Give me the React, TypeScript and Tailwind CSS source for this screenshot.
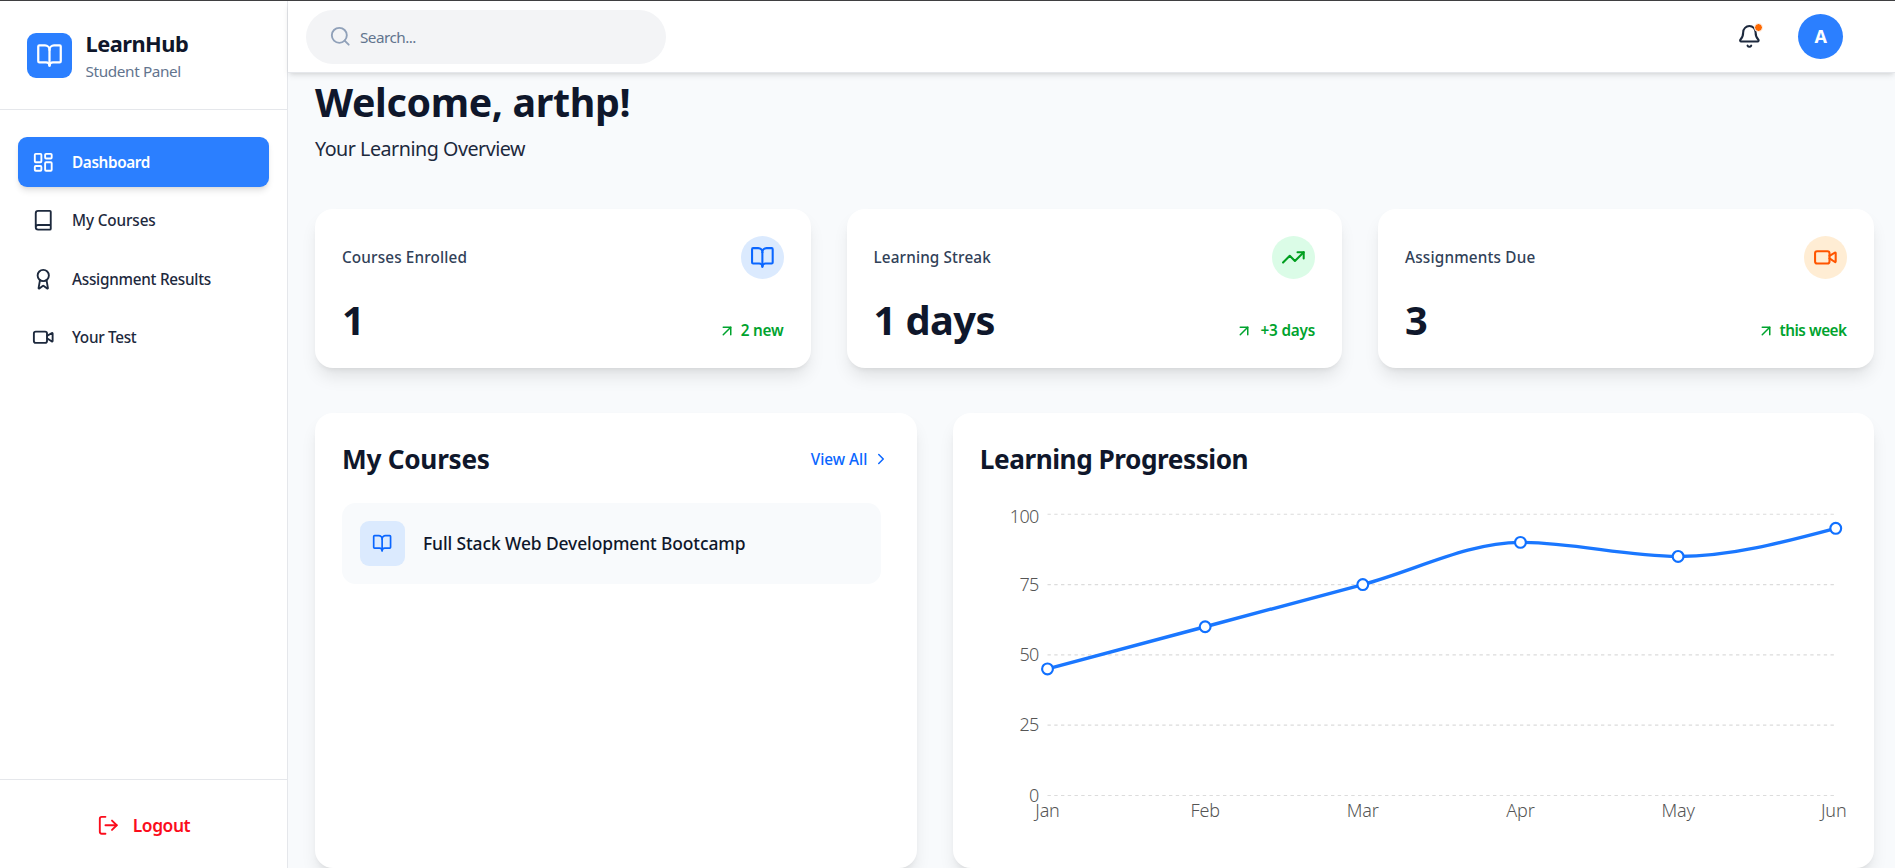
import React from "react";
import {
  ArrowUpRight, Award, Bell, Book, BookOpen, ChevronRight, LayoutDashboard, LogOut, Search, TrendingUp, Video,
} from "lucide-react";

const navItems = [
  { label: "Dashboard", icon: LayoutDashboard, active: true, tracking: "tracking-[-0.024em]" },
  { label: "My Courses", icon: Book, active: false, tracking: "tracking-[-0.008em]" },
  { label: "Assignment Results", icon: Award, active: false, tracking: "tracking-[-0.017em]" },
  { label: "Your Test", icon: Video, active: false, tracking: "tracking-[-0.02em]" },
];

const stats = [
  {
    label: "Courses Enrolled", labelTracking: "tracking-[0.009em]",
    value: "1", trend: "2 new", trendStyle: "tracking-[-0.014em]",
    icon: BookOpen, tone: "bg-blue-100 text-[#0a66ff]",
  },
  {
    label: "Learning Streak", labelTracking: "tracking-[0.008em]",
    value: "1 days", trend: "+3 days", trendStyle: "pl-[2.5px] tracking-[-0.013em]",
    icon: TrendingUp, tone: "bg-green-100 text-[#009f1f]",
  },
  {
    label: "Assignments Due", labelTracking: "tracking-[0.011em]",
    value: "3", trend: "this week", trendStyle: "tracking-[-0.031em]",
    icon: Video, tone: "bg-[#ffedd4] text-[#ff5500]",
  },
];

const progress = [
  { month: "Jan", value: 45 },
  { month: "Feb", value: 60 },
  { month: "Mar", value: 75 },
  { month: "Apr", value: 90 },
  { month: "May", value: 85 },
  { month: "Jun", value: 95 },
];

const plot = { left: 60, right: 760.67, top: 10, bottom: 260 };
const yOf = (v: number) => plot.bottom - (v / 100) * (plot.bottom - plot.top);
const xOf = (i: number) => plot.left + (i * (plot.right - plot.left)) / (progress.length - 1);

/** Monotone cubic path through evenly spaced points. */
function monotonePath(pts: { x: number; y: number }[]) {
  const n = pts.length;
  const h = pts[1].x - pts[0].x;
  const s = pts.slice(1).map((p, i) => (p.y - pts[i].y) / h);
  const t = pts.map((_, i) => {
    if (i === 0 || i === n - 1) return 0;
    const a = s[i - 1];
    const b = s[i];
    return (Math.sign(a) + Math.sign(b)) * Math.min(Math.abs(a), Math.abs(b), Math.abs(a + b) / 4) || 0;
  });
  t[0] = (3 * s[0] - t[1]) / 2;
  t[n - 1] = (3 * s[n - 2] - t[n - 2]) / 2;
  return pts.slice(1).reduce((d, p, i) => {
    const q = pts[i];
    return `${d}C${q.x + h / 3},${q.y + (t[i] * h) / 3},${p.x - h / 3},${p.y - (t[i + 1] * h) / 3},${p.x},${p.y}`;
  }, `M${pts[0].x},${pts[0].y}`);
}

function ProgressChart() {
  const pts = progress.map((p, i) => ({ x: xOf(i), y: yOf(p.value) }));
  return (
    <svg width="770.67" height="300" viewBox="0 0 770.67 300" className="block overflow-visible">
      {[0, 25, 50, 75, 100].map((v) => (
        <g key={v}>
          <line x1={plot.left} x2={plot.right} y1={yOf(v)} y2={yOf(v)} stroke="#dcdcdc" strokeDasharray="3 3" />
          <text x="52" y={yOf(v) + (v === 100 ? 7.5 : 5.5)} textAnchor="end" fill="#555" className="text-base font-light tracking-[-0.04em]">{v}</text>
        </g>
      ))}
      {progress.map((p, i) => (
        <text key={p.month} x={i === 5 ? xOf(i) - 1.8 : xOf(i)} y="278.9" textAnchor="middle" fill="#555" className="text-base font-light tracking-[-0.01em]">{p.month}</text>
      ))}
      <path d={monotonePath(pts)} fill="none" stroke="#1a77ff" strokeWidth="3" />
      {pts.map((p) => (
        <circle key={p.x} cx={p.x} cy={p.y} r="4.8" fill="#fff" stroke="#1070ff" strokeWidth="1.9" />
      ))}
    </svg>
  );
}

export default function App() {
  return (
    <div className="flex h-[calc(100vh/1.125)] flex-col overflow-hidden border-t border-[#3f3f41] bg-white font-['Noto_Sans','Open_Sans',sans-serif] text-slate-900 [zoom:1.125]">
      <div className="flex min-h-0 flex-1">
        <aside className="flex w-64 shrink-0 flex-col border-r border-gray-200 bg-white">
          <div className="flex items-center gap-3 border-b border-gray-200 p-6">
            <div className="flex size-10 items-center justify-center rounded-lg bg-blue-500 text-white">
              <BookOpen size={24} />
            </div>
            <div>
              <h1 className="text-[19.4px]/7 font-bold tracking-[-0.024em]">LearnHub</h1>
              <p className="text-[13.6px]/5 tracking-[-0.024em] text-slate-500">Student Panel</p>
            </div>
          </div>
          <nav className="flex flex-1 flex-col gap-2 px-4 py-6">
            {navItems.map(({ label, icon: Icon, active, tracking }) => (
              <a key={label} className={active ? "flex items-center gap-4 rounded-lg bg-blue-500 px-3 py-3 text-[13.6px]/5 font-semibold text-white shadow-md" : "flex items-center gap-4 rounded-lg px-3 py-3 text-[13.6px]/5 font-medium text-slate-800"}>
                <Icon size={20} />
                <span className={tracking}>{label}</span>
              </a>
            ))}
          </nav>
          <div className="flex h-[79px] items-center justify-center gap-3 border-t border-gray-200 pt-0.5 text-[15.5px]/6 font-semibold text-[#fb0d1c]">
            <LogOut size={20} />
            <span className="tracking-[-0.026em]">Logout</span>
          </div>
        </aside>

        <div className="flex min-w-0 flex-1 flex-col bg-[#f8fafc]">
          <header className="z-10 flex h-16 shrink-0 items-center justify-between border-b border-gray-200 bg-white pr-[46px] pl-4 shadow-md">
            <div className="flex h-12 w-80 items-center gap-2 rounded-full bg-gray-100 px-5">
              <Search size={20} className="text-slate-400" />
              <span className="pt-px text-[13.6px]/5 tracking-[-0.035em] text-slate-500">Search...</span>
            </div>
            <div className="flex items-center gap-[32.5px]">
              <div className="relative text-slate-800">
                <Bell size={22} />
                <span className="absolute -top-px -right-[1.5px] size-2 rounded-full border border-white bg-orange-500" />
              </div>
              <div className="flex size-10 items-center justify-center rounded-full bg-blue-500 text-base font-bold text-white">A</div>
            </div>
          </header>

          <main className="min-h-0 flex-1 overflow-hidden pr-[19px] pl-6">
            <h2 className="mt-1.5 text-[35px]/10 font-bold tracking-[-0.009em]">Welcome, arthp!</h2>
            <p className="mt-[7px] text-[17.5px]/7 tracking-[-0.024em] text-slate-800">Your Learning Overview</p>

            <div className="mt-10 grid grid-cols-3 gap-8">
              {stats.map(({ label, labelTracking, value, trend, trendStyle, icon: Icon, tone }) => (
                <section key={label} className="rounded-2xl bg-white px-6 pt-6 pb-[23.3px] shadow-lg">
                  <div className="flex items-center justify-between">
                    <span className={`text-[13.6px]/5 font-medium text-slate-700 ${labelTracking}`}>{label}</span>
                    <span className={`rounded-full p-2 ${tone}`}><Icon size={22} /></span>
                  </div>
                  <div className="mt-4 flex items-end justify-between">
                    <span className="text-[35.4px]/10 font-bold tracking-[-0.015em]">{value}</span>
                    <span className="flex items-center gap-1 text-[13.6px]/5 font-semibold text-[#00a32e]">
                      <ArrowUpRight size={16} />
                      <span className={trendStyle}>{trend}</span>
                    </span>
                  </div>
                </section>
              ))}
            </div>

            <div className="mt-[39.6px] grid grid-cols-5 gap-8">
              <section className="col-span-2 rounded-2xl bg-white p-6 shadow-lg">
                <div className="flex items-center justify-between pt-px">
                  <h3 className="text-[23.3px]/8 font-bold tracking-[-0.01em]">My Courses</h3>
                  <span className="flex items-center gap-1 text-[13.6px]/5 font-medium text-[#0a66ff]">View All<ChevronRight size={16} /></span>
                </div>
                <div className="mt-[23px] mr-2 flex items-center gap-4 rounded-xl bg-[#f8fafc] p-4">
                  <span className="flex size-10 items-center justify-center rounded-lg bg-blue-100 text-[#0a66ff]"><BookOpen size={18} /></span>
                  <span className="text-[15.5px]/6 font-medium tracking-[-0.006em]">Full Stack Web Development Bootcamp</span>
                </div>
              </section>
              <section className="col-span-3 h-[404.5px] rounded-2xl bg-white p-6 shadow-lg">
                <h3 className="pt-px text-[23.3px]/8 font-bold tracking-[-0.018em]">Learning Progression</h3>
                <div className="mt-[23px]"><ProgressChart /></div>
              </section>
            </div>
          </main>
        </div>
      </div>
    </div>
  );
}
